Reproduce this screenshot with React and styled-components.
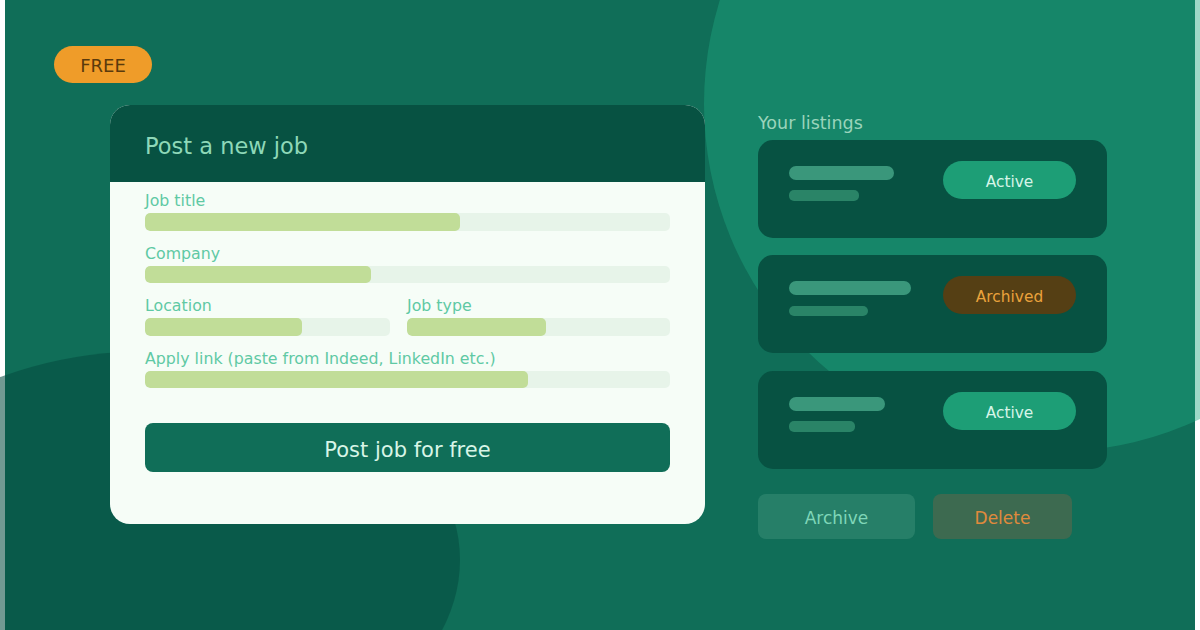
import React from 'react'
import styled, { createGlobalStyle } from 'styled-components'

const GlobalStyle = createGlobalStyle`
  html, body {
    margin: 0;
    padding: 0;
    overflow: hidden;
    background: #ffffff;
  }
  body {
    font-family: "DejaVu Sans", "Noto Sans", sans-serif;
  }
`

const Frame = styled.div`
  position: relative;
  width: 1200px;
  height: 630px;
  overflow: hidden;
`

const Canvas = styled.div`
  position: relative;
  width: 1190px;
  height: 630px;
  margin-left: 5px;
  padding: 46px 0 0 49px;
  box-sizing: border-box;
  background: #106e58;
`

const Blob = styled.div`
  position: absolute;
  left: ${(p) => p.$left}px;
  top: ${(p) => p.$top}px;
  width: ${(p) => p.$w}px;
  height: ${(p) => p.$h}px;
  border-radius: 50%;
  background: ${(p) => p.$color};
  pointer-events: none;
`

const Content = styled.div`
  position: relative;
  z-index: 1;
`

const FreeBadge = styled.div`
  display: flex;
  align-items: center;
  justify-content: center;
  width: 98px;
  height: 37px;
  padding-top: 2px;
  box-sizing: border-box;
  border-radius: 19px;
  background: #ef9c29;
  color: #5a3a0c;
  font-size: 18px;
`

const Main = styled.div`
  display: flex;
  align-items: flex-start;
  gap: 53px;
  margin: 22px 0 0 56px;
`

const Card = styled.section`
  width: 595px;
  height: 419px;
  border-radius: 20px;
  background: #f6fdf7;
  overflow: hidden;
`

const CardHeader = styled.div`
  display: flex;
  align-items: center;
  height: 77px;
  padding: 5px 35px 0;
  box-sizing: border-box;
  background: #075242;
  color: #8ed8b8;
  font-size: 22.5px;
`

const CardBody = styled.div`
  display: flex;
  flex-direction: column;
  gap: 14px;
  padding: 10px 35px 0;
`

const Field = styled.div`
  display: flex;
  flex-direction: column;
`

const Label = styled.div`
  margin-bottom: 3px;
  color: #5fc9a4;
  font-size: 15.8px;
  line-height: 18px;
  white-space: nowrap;
`

const Track = styled.div`
  height: 17.5px;
  border-radius: 5px;
  background: #e7f4e9;
  overflow: hidden;
`

const Fill = styled.div`
  width: ${(p) => p.$pct}%;
  height: 100%;
  border-radius: 5px;
  background: #c1dd98;
`

const Split = styled.div`
  display: grid;
  grid-template-columns: 245px 263px;
  gap: 17px;
`

const SubmitButton = styled.button`
  height: 49px;
  margin-top: 21px;
  padding: 4px 0 0;
  border: none;
  border-radius: 8px;
  background: #106e58;
  color: #d8f5e7;
  font-family: inherit;
  font-size: 21px;
`

const Side = styled.div`
  display: flex;
  flex-direction: column;
  width: 349px;
  padding-top: 7.7px;
`

const SideTitle = styled.div`
  margin-bottom: 7.3px;
  color: #9ad4bb;
  font-size: 17.5px;
  line-height: 20px;
`

const ListingList = styled.div`
  display: flex;
  flex-direction: column;
  gap: 17.5px;
`

const Listing = styled.div`
  display: flex;
  justify-content: space-between;
  align-items: flex-start;
  height: 98px;
  padding: 21px 31px 0;
  box-sizing: border-box;
  border-radius: 15px;
  background: #075242;
`

const Lines = styled.div`
  display: flex;
  flex-direction: column;
  gap: 10.5px;
  padding-top: 5px;
`

const TitleLine = styled.div`
  width: ${(p) => p.$w}px;
  height: 14px;
  border-radius: 7px;
  background: #3a977b;
`

const MetaLine = styled.div`
  width: ${(p) => p.$w}px;
  height: 10.5px;
  border-radius: 5px;
  background: #2a8467;
`

const StatusPill = styled.div`
  display: flex;
  align-items: center;
  justify-content: center;
  width: 133px;
  height: 38px;
  padding-top: 4px;
  box-sizing: border-box;
  border-radius: 19px;
  font-size: 15.4px;
  background: ${(p) => (p.$archived ? '#553f14' : '#1d9e76')};
  color: ${(p) => (p.$archived ? '#eaa23c' : '#d6f5e8')};
`

const Actions = styled.div`
  display: flex;
  gap: 18px;
  margin-top: 25px;
`

const ActionButton = styled.button`
  width: ${(p) => p.$w}px;
  height: 45px;
  padding: 4px 0 0;
  border: none;
  border-radius: 8px;
  font-family: inherit;
  font-size: 17px;
  background: ${(p) => (p.$danger ? '#3d6a50' : '#267f68')};
  color: ${(p) => (p.$danger ? '#e08a3c' : '#7fd6b8')};
`

const fields = [
  { label: 'Job title', pct: 60 },
  { label: 'Company', pct: 43 },
]

const listings = [
  { title: 105, meta: 70, archived: false },
  { title: 122, meta: 79, archived: true },
  { title: 96, meta: 66, archived: false },
]

const App = () => {
  return (
    <>
      <GlobalStyle />
      <Frame>
        <Canvas>
          <Blob $left={699} $top={-244} $w={696} $h={696} $color='rgba(30, 168, 128, 0.43)' />
          <Blob $left={-165} $top={351} $w={620} $h={418} $color='rgba(5, 75, 63, 0.57)' />
          <Content>
            <FreeBadge>FREE</FreeBadge>
            <Main>
              <Card>
                <CardHeader>Post a new job</CardHeader>
                <CardBody>
                  {fields.map((field) => (
                    <Field key={field.label}>
                      <Label>{field.label}</Label>
                      <Track>
                        <Fill $pct={field.pct} />
                      </Track>
                    </Field>
                  ))}
                  <Split>
                    <Field>
                      <Label>Location</Label>
                      <Track>
                        <Fill $pct={64} />
                      </Track>
                    </Field>
                    <Field>
                      <Label>Job type</Label>
                      <Track>
                        <Fill $pct={53} />
                      </Track>
                    </Field>
                  </Split>
                  <Field>
                    <Label>Apply link (paste from Indeed, LinkedIn etc.)</Label>
                    <Track>
                      <Fill $pct={73} />
                    </Track>
                  </Field>
                  <SubmitButton>Post job for free</SubmitButton>
                </CardBody>
              </Card>

              <Side>
                <SideTitle>Your listings</SideTitle>
                <ListingList>
                  {listings.map((item, index) => (
                    <Listing key={index}>
                      <Lines>
                        <TitleLine $w={item.title} />
                        <MetaLine $w={item.meta} />
                      </Lines>
                      <StatusPill $archived={item.archived}>
                        {item.archived ? 'Archived' : 'Active'}
                      </StatusPill>
                    </Listing>
                  ))}
                </ListingList>
                <Actions>
                  <ActionButton $w={157}>Archive</ActionButton>
                  <ActionButton $w={139} $danger>
                    Delete
                  </ActionButton>
                </Actions>
              </Side>
            </Main>
          </Content>
        </Canvas>
      </Frame>
    </>
  )
}

export default App
